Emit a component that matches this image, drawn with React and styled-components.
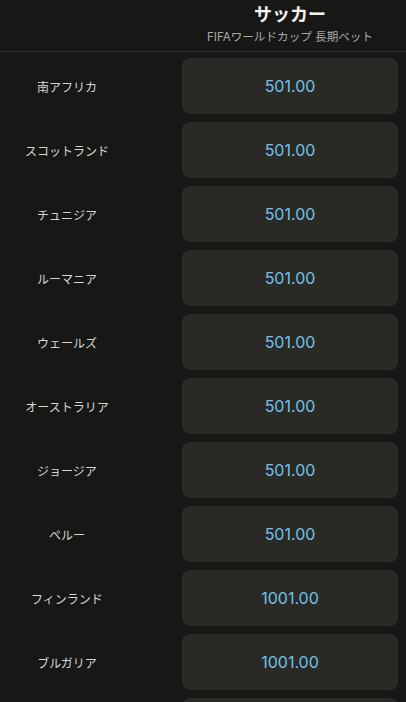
import styled, { createGlobalStyle } from 'styled-components';

const GlobalStyle = createGlobalStyle`
	html, body {
		margin: 0;
		padding: 0;
		background: #171716;
	}
	body {
		font-family: "Inter", "Noto Sans CJK JP", sans-serif;
		-webkit-font-smoothing: antialiased;
	}
`;

const Pagina = styled.div`
	width: 406px;
	height: 702px;
	background: #171716;
	overflow: hidden;
`;

const Cabecera = styled.header`
	display: grid;
	grid-template-columns: 134px 216px;
	justify-content: space-between;
	padding: 0 8px 0 0;
	height: 51px;
	border-bottom: 1px solid #2f2f2d;
`;

const BloqueTitulo = styled.div`
	grid-column: 2;
	display: flex;
	flex-direction: column;
	align-items: center;
	padding-top: 2px;

	h1 {
		margin: 0;
		font-size: 18px;
		line-height: 26px;
		font-weight: 700;
		color: #f2f2f2;
	}

	p {
		margin: 0;
		font-size: 11.6px;
		line-height: 18px;
		color: #a9a9a6;
		white-space: nowrap;
	}
`;

const Lista = styled.div`
	display: flex;
	flex-direction: column;
	gap: 8px;
	padding: 6px 8px 0 0;
`;

const Fila = styled.div`
	display: grid;
	grid-template-columns: 134px 216px;
	justify-content: space-between;
	align-items: center;
	height: 56px;
`;

const Equipo = styled.span`
	text-align: center;
	font-size: 12px;
	color: #d6d6d4;
`;

const Cuota = styled.button`
	height: 56px;
	border: none;
	border-radius: 8px;
	background: #2a2926;
	color: #6fc3ea;
	font-family: "Inter", sans-serif;
	font-size: 16px;
	cursor: pointer;
`;

const equipos = [
	{ nombre: '南アフリカ', cuota: '501.00' },
	{ nombre: 'スコットランド', cuota: '501.00' },
	{ nombre: 'チュニジア', cuota: '501.00' },
	{ nombre: 'ルーマニア', cuota: '501.00' },
	{ nombre: 'ウェールズ', cuota: '501.00' },
	{ nombre: 'オーストラリア', cuota: '501.00' },
	{ nombre: 'ジョージア', cuota: '501.00' },
	{ nombre: 'ペルー', cuota: '501.00' },
	{ nombre: 'フィンランド', cuota: '1001.00' },
	{ nombre: 'ブルガリア', cuota: '1001.00' },
	{ nombre: '', cuota: '' }
];

const App = () => {
	return (
		<>
			<GlobalStyle />
			<Pagina>
				<Cabecera>
					<BloqueTitulo>
						<h1>サッカー</h1>
						<p>FIFAワールドカップ 長期ベット</p>
					</BloqueTitulo>
				</Cabecera>
				<Lista>
					{equipos.map((equipo, index) => (
						<Fila key={index}>
							<Equipo>{equipo.nombre}</Equipo>
							<Cuota>{equipo.cuota}</Cuota>
						</Fila>
					))}
				</Lista>
			</Pagina>
		</>
	);
};

export default App;
